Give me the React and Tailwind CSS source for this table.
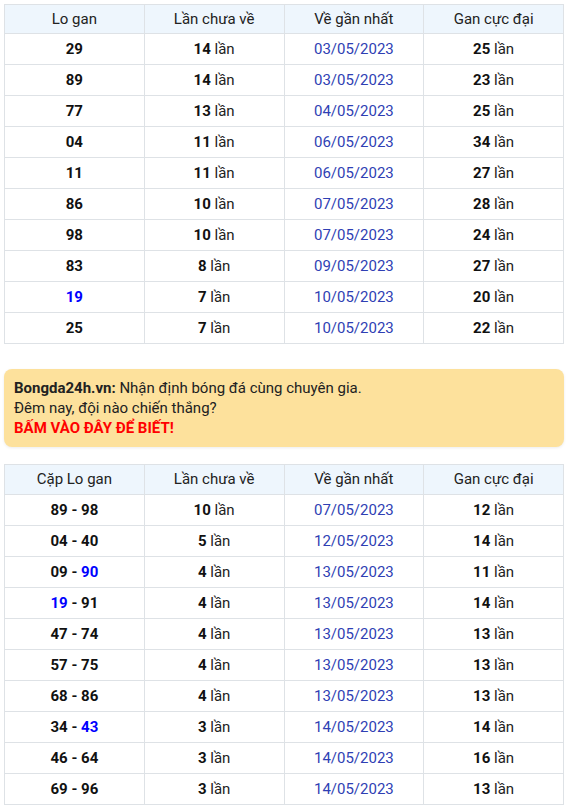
import React from "react";

const loGan = [
  ["29", 14, "03/05/2023", 25],
  ["89", 14, "03/05/2023", 23],
  ["77", 13, "04/05/2023", 25],
  ["04", 11, "06/05/2023", 34],
  ["11", 11, "06/05/2023", 27],
  ["86", 10, "07/05/2023", 28],
  ["98", 10, "07/05/2023", 24],
  ["83", 8, "09/05/2023", 27],
  ["19*", 7, "10/05/2023", 20],
  ["25", 7, "10/05/2023", 22],
];

const capLoGan = [
  ["89 - 98", 10, "07/05/2023", 12],
  ["04 - 40", 5, "12/05/2023", 14],
  ["09 - 90*", 4, "13/05/2023", 11],
  ["19* - 91", 4, "13/05/2023", 14],
  ["47 - 74", 4, "13/05/2023", 13],
  ["57 - 75", 4, "13/05/2023", 13],
  ["68 - 86", 4, "13/05/2023", 13],
  ["34 - 43*", 3, "14/05/2023", 14],
  ["46 - 64", 3, "14/05/2023", 16],
  ["69 - 96", 3, "14/05/2023", 13],
];

// "*" marks a number shown in blue
function Num({ text }) {
  const parts = text.split(" ");
  return (
    <span className="font-bold text-[#111]">
      {parts.map((p, i) => {
        const blue = p.endsWith("*");
        const v = blue ? p.slice(0, -1) : p;
        return (
          <React.Fragment key={i}>
            {i > 0 && " "}
            <span className={blue ? "text-[#0000ff]" : ""}>{v}</span>
          </React.Fragment>
        );
      })}
    </span>
  );
}

function GanTable({ first, rows, tall }) {
  const th =
    "border border-[#dee2e6] font-normal text-[#222] " +
    (tall ? "h-[30px]" : "h-[29px]");
  const td = "border border-[#dee2e6] h-[31px]";
  return (
    <table className="w-full border-collapse table-fixed text-center text-[15px]">
      <thead>
        <tr className="bg-[#eef6fd]">
          <th className={th}>{first}</th>
          <th className={th}>Lần chưa về</th>
          <th className={th}>Về gần nhất</th>
          <th className={th}>Gan cực đại</th>
        </tr>
      </thead>
      <tbody>
        {rows.map((r, i) => (
          <tr key={i}>
            <td className={td}>
              <Num text={r[0]} />
            </td>
            <td className={td + " text-[#222]"}>
              <span className="font-bold text-[#111]">{r[1]}</span> lần
            </td>
            <td className={td + " text-[#2f3fb4]"}>{r[2]}</td>
            <td className={td + " text-[#222]"}>
              <span className="font-bold text-[#111]">{r[3]}</span> lần
            </td>
          </tr>
        ))}
      </tbody>
    </table>
  );
}

export default function App() {
  return (
    <div className="bg-white px-1 pt-1 font-['Roboto',sans-serif]">
      <GanTable first="Lo gan" rows={loGan} />

      <div className="mt-[25px] mb-[17px] rounded-lg bg-[#fde19c] px-[10px] py-[9px] text-[15px] leading-5 text-[#222] shadow-[0_1px_3px_rgba(0,0,0,0.08)]">
        <div>
          <span className="font-bold">Bongda24h.vn:</span> Nhận định bóng đá
          cùng chuyên gia.
        </div>
        <div>Đêm nay, đội nào chiến thắng?</div>
        <div className="font-bold text-[#ff0000]">BẤM VÀO ĐÂY ĐỂ BIẾT!</div>
      </div>

      <GanTable first="Cặp Lo gan" rows={capLoGan} tall />
    </div>
  );
}
